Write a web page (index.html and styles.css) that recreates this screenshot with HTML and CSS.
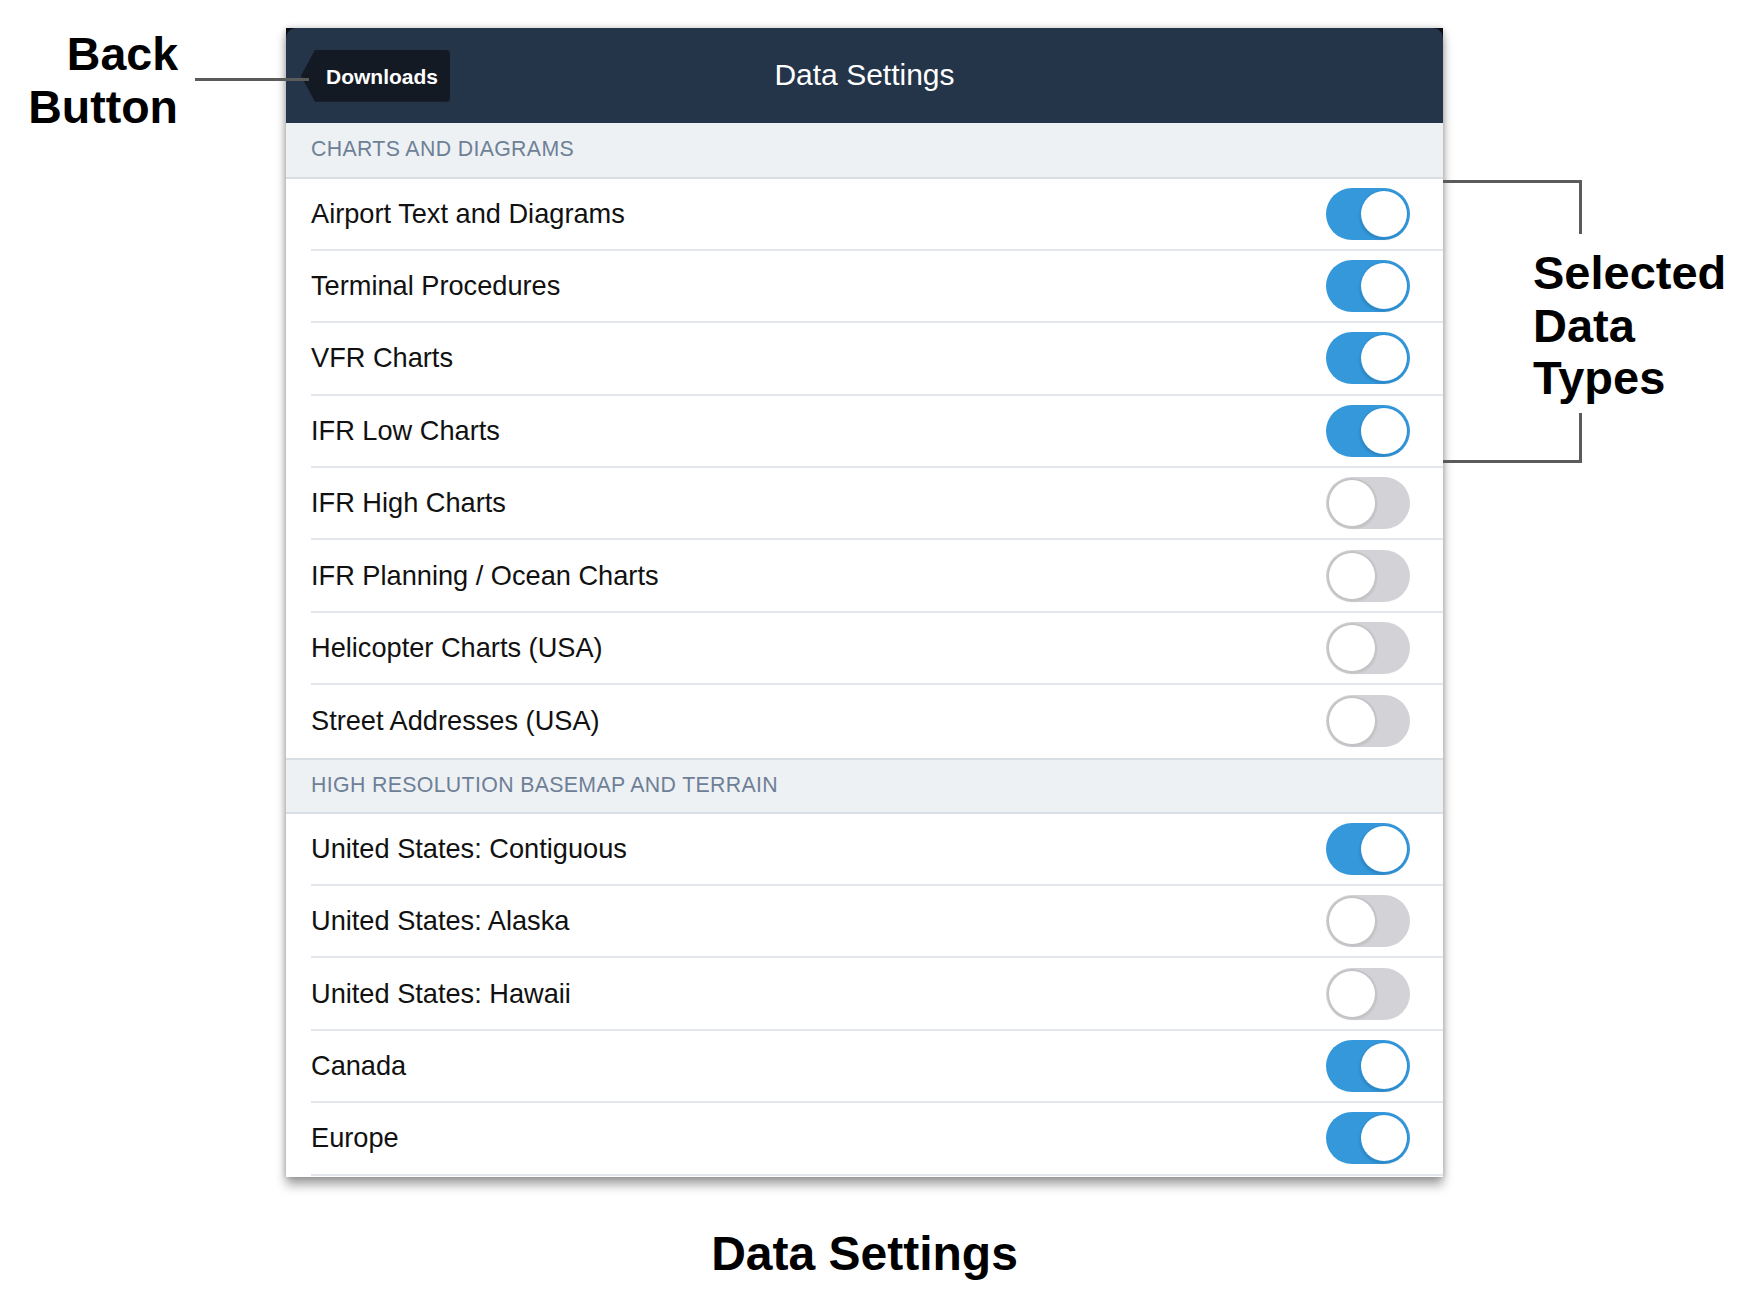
FILE: index.html
```html
<!DOCTYPE html>
<html lang="en">
<head>
<meta charset="utf-8">
<title>Data Settings</title>
<link rel="stylesheet" href="styles.css">
</head>
<body>
<div class="stage">
  <div class="note-left">
    <div class="note-text">Back<br>Button</div>
    <div class="leader"></div>
  </div>

  <div class="main">
    <div class="panel">
      <div class="nav-wrap">
        <div class="nav">
          <div class="back"><span>Downloads</span></div>
          <div class="nav-title">Data Settings</div>
          <div class="nav-spacer"></div>
        </div>
      </div>

      <div class="section">
        <div class="section-head">Charts and Diagrams</div>
        <div class="row"><span class="label">Airport Text and Diagrams</span><span class="toggle on"><span class="knob"></span></span></div>
        <div class="row"><span class="label">Terminal Procedures</span><span class="toggle on"><span class="knob"></span></span></div>
        <div class="row"><span class="label">VFR Charts</span><span class="toggle on"><span class="knob"></span></span></div>
        <div class="row"><span class="label">IFR Low Charts</span><span class="toggle on"><span class="knob"></span></span></div>
        <div class="row"><span class="label">IFR High Charts</span><span class="toggle off"><span class="knob"></span></span></div>
        <div class="row"><span class="label">IFR Planning / Ocean Charts</span><span class="toggle off"><span class="knob"></span></span></div>
        <div class="row"><span class="label">Helicopter Charts (USA)</span><span class="toggle off"><span class="knob"></span></span></div>
        <div class="row"><span class="label">Street Addresses (USA)</span><span class="toggle off"><span class="knob"></span></span></div>
      </div>

      <div class="section">
        <div class="section-head">High Resolution Basemap and Terrain</div>
        <div class="row"><span class="label">United States: Contiguous</span><span class="toggle on"><span class="knob"></span></span></div>
        <div class="row"><span class="label">United States: Alaska</span><span class="toggle off"><span class="knob"></span></span></div>
        <div class="row"><span class="label">United States: Hawaii</span><span class="toggle off"><span class="knob"></span></span></div>
        <div class="row"><span class="label">Canada</span><span class="toggle on"><span class="knob"></span></span></div>
        <div class="row"><span class="label">Europe</span><span class="toggle on"><span class="knob"></span></span></div>
      </div>
    </div>
    <div class="caption">Data Settings</div>
  </div>

  <div class="note-right">
    <div class="bracket top"></div>
    <div class="note-text">Selected<br>Data<br>Types</div>
    <div class="bracket bottom"></div>
  </div>
</div>
</body>
</html>
```

FILE: styles.css
```css
* { box-sizing: border-box; }

html, body {
  margin: 0;
  padding: 0;
  background: #ffffff;
}

body {
  width: 1758px;
  height: 1296px;
  overflow: hidden;
  font-family: "Liberation Sans", Arial, Helvetica, sans-serif;
  color: #111111;
}

.stage {
  display: grid;
  grid-template-columns: 286px 1157px 1fr;
  align-items: start;
  padding-top: 28px;
}

/* ---------- left annotation ---------- */
.note-left {
  position: relative;
  height: 200px;
}

.note-text {
  font-weight: 700;
  color: #000;
}

.note-left .note-text {
  text-align: right;
  padding-right: 108px;
  margin-top: 0;
  font-size: 46.5px;
  line-height: 53px;
}

.leader {
  position: absolute;
  left: 195px;
  top: 50px;
  width: 114px;
  height: 3px;
  background: #5b5b5b;
  z-index: 2;
}

/* ---------- panel ---------- */
.panel {
  background: #ffffff;
  padding-bottom: 1.5px;
  box-shadow: 0 8px 10px rgba(0, 0, 0, 0.35), 0 0 6px rgba(0, 0, 0, 0.22);
}

.nav-wrap {
  background: #0b0f15;
}

.nav {
  height: 94.5px;
  background: #243449;
  border-radius: 10px 10px 0 0;
  display: grid;
  grid-template-columns: 1fr auto 1fr;
  align-items: center;
  padding: 0 15px;
}

.back {
  justify-self: start;
  height: 52px;
  width: 149px;
  margin-top: 1px;
  background: #141a24;
  border-radius: 0 4px 4px 0;
  clip-path: polygon(14px 0, 100% 0, 100% 100%, 14px 100%, 0 50%);
  display: flex;
  align-items: center;
  padding-left: 25px;
  padding-top: 2px;
  color: #ffffff;
  font-weight: 700;
  font-size: 21px;
}

.nav-title {
  color: #ffffff;
  font-size: 30px;
}

.section-head {
  height: 56px;
  background: #edf1f4;
  border-bottom: 2px solid #d9dee4;
  display: flex;
  align-items: center;
  padding-left: 25px;
  font-size: 21.3px;
  letter-spacing: 0.35px;
  color: #6e8096;
  text-transform: uppercase;
}

.section + .section .section-head {
  border-top: 2px solid #d9dee4;
}

.row {
  height: 72.4px;
  margin-left: 25px;
  padding-right: 33px;
  display: flex;
  align-items: center;
  justify-content: space-between;
  border-bottom: 2px solid #e3e7ec;
  font-size: 27.2px;
  color: #111111;
}

.section:not(:last-child) .row:last-child {
  border-bottom: none;
}

.toggle {
  width: 84px;
  height: 52px;
  border-radius: 26px;
  display: flex;
  align-items: center;
  padding: 3px;
}

.toggle.on {
  background: #3498db;
  justify-content: flex-end;
}

.toggle.off {
  background: #d3d3d7;
  justify-content: flex-start;
}

.knob {
  width: 46px;
  height: 46px;
  border-radius: 50%;
  background: #ffffff;
}

.toggle.on .knob {
  box-shadow: 0 0 0 1px #2f8fd2, -1px 2px 3px rgba(0, 0, 0, 0.18);
}

.toggle.off .knob {
  box-shadow: 0 0 0 2px #c4c4c7, 1px 2px 3px rgba(0, 0, 0, 0.15);
}

.caption {
  margin-top: 49px;
  text-align: center;
  font-weight: 700;
  font-size: 48px;
  line-height: 56px;
  color: #000;
}

/* ---------- right annotation ---------- */
.note-right {
  display: flex;
  flex-direction: column;
}

.bracket {
  width: 139px;
  border-right: 3px solid #5b5b5b;
}

.bracket.top {
  margin-top: 151.5px;
  height: 54.5px;
  border-top: 3px solid #5b5b5b;
}

.note-right .note-text {
  margin: 13px 0 0 90px;
  font-size: 47px;
  line-height: 52.5px;
}

.bracket.bottom {
  margin-top: 8.5px;
  height: 49.5px;
  border-bottom: 3px solid #5b5b5b;
}
```
